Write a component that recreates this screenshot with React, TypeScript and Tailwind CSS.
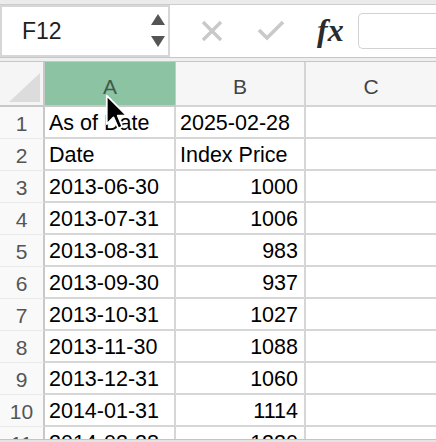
import React from "react";

const rows: [string, string, string][] = [
  ["1", "As of Date", "2025-02-28"],
  ["2", "Date", "Index Price"],
  ["3", "2013-06-30", "1000"],
  ["4", "2013-07-31", "1006"],
  ["5", "2013-08-31", "983"],
  ["6", "2013-09-30", "937"],
  ["7", "2013-10-31", "1027"],
  ["8", "2013-11-30", "1088"],
  ["9", "2013-12-31", "1060"],
  ["10", "2014-01-31", "1114"],
  ["11", "2014-02-28", "1220"],
];

function Cursor() {
  return (
    <svg
      className="absolute left-[104px] top-[93px]"
      width="25"
      height="39"
      viewBox="-1 -1 14 22"
    >
      <path
        d="M0.5 0.5 L0.5 16.5 L4.3 12.8 L7 19 L9.3 18 L6.7 11.8 L11.8 11.8 Z"
        fill="#000"
        stroke="#fff"
        strokeWidth="1"
        strokeLinejoin="round"
      />
    </svg>
  );
}

export default function App() {
  return (
    <div
      className="relative w-[436px] h-[442px] overflow-hidden bg-white"
      style={{ fontFamily: '"Liberation Sans", Arial, sans-serif' }}
    >
      {/* top strip */}
      <div className="h-[5px] bg-[#ebebeb] border-b border-[#cdcdcd]" />

      {/* formula bar */}
      <div className="flex h-[52px] bg-white">
        <div className="flex items-center justify-between w-[170px] border-2 border-[#d6d6d6] bg-white pl-[20px] pr-[2px]">
          <span className="text-[23px] text-[#1f1f1f]">F12</span>
          <svg width="16" height="36" viewBox="0 0 16 36">
            <path d="M1 12 L8 1 L15 12 Z" fill="#555" />
            <path d="M1 23 L15 23 L8 34 Z" fill="#555" />
          </svg>
        </div>
        <div className="flex items-center pl-[31px]">
          <svg width="22" height="22" viewBox="0 0 22 22">
            <path d="M2 2 L20 20 M20 2 L2 20" stroke="#c9c9c9" strokeWidth="3.4" />
          </svg>
          <svg className="ml-[34px]" width="28" height="22" viewBox="0 0 28 22">
            <path d="M2 10 L10 18 L26 2" stroke="#c9c9c9" strokeWidth="3.6" fill="none" />
          </svg>
          <span
            className="ml-[32px] text-[32px] italic font-semibold text-[#2b2b2b] leading-none pb-[2px]"
            style={{ fontFamily: '"Liberation Serif", "Times New Roman", serif' }}
          >
            fx
          </span>
        </div>
        <div className="flex-1 ml-[14px] my-[8px] rounded-l-[5px] border border-r-0 border-[#d2d2d2] bg-white" />
      </div>

      {/* double divider */}
      <div className="h-[5px] bg-[#efefef] border-y border-[#c6c6c6]" />

      {/* grid */}
      <div className="grid grid-cols-[45px_131px_130px_1fr]">
        <div className="h-[45px] bg-[#f5f5f5] border-r-2 border-b-2 border-[#c8c8c8] flex items-end justify-end pr-[3px] pb-[3px]">
          <svg width="31" height="29" viewBox="0 0 31 29">
            <path d="M0 29 L31 0 L31 29 Z" fill="#dcdcdc" />
          </svg>
        </div>
        <div className="h-[45px] bg-[#8bc3a3] border-r border-b-2 border-[#c8c8c8] flex items-center justify-center pt-[6px] text-[21px] text-[#3f5b4b]">
          A
        </div>
        <div className="h-[45px] bg-[#f6f6f6] border-r-2 border-b-2 border-[#d4d4d4] flex items-center justify-center pt-[6px] text-[21px] text-[#444]">
          B
        </div>
        <div className="h-[45px] bg-[#f6f6f6] border-b-2 border-[#d4d4d4] flex items-center justify-center pt-[6px] text-[21px] text-[#444]">
          C
        </div>

        {rows.map(([n, a, b]) => {
          const num = /^\d+$/.test(b);
          return (
            <React.Fragment key={n}>
              <div className="h-[32px] bg-[#f9f9f9] border-r-2 border-b border-r-[#c8c8c8] border-b-[#ececec] flex items-center justify-center pt-[2px] text-[21px] text-[#555]">
                {n}
              </div>
              <div className="h-[32px] border-r-2 border-b-2 border-[#d6d6d6] flex items-center pl-[4px] pt-[2px] text-[21.5px] text-black whitespace-nowrap overflow-hidden">
                {a}
              </div>
              <div
                className={`h-[32px] border-r-2 border-b-2 border-[#d6d6d6] flex items-center pt-[2px] text-[21.5px] text-black whitespace-nowrap overflow-hidden ${
                  num ? "justify-end pr-[6px]" : "pl-[4px]"
                }`}
              >
                {b}
              </div>
              <div className="h-[32px] border-b-2 border-[#d6d6d6]" />
            </React.Fragment>
          );
        })}
      </div>

      {/* bottom strip that covers the partly visible row */}
      <div className="absolute left-0 right-0 bottom-0 h-[3px] bg-[#e4e4e4] border-t border-[#c4c4c4]" />

      <Cursor />
    </div>
  );
}
